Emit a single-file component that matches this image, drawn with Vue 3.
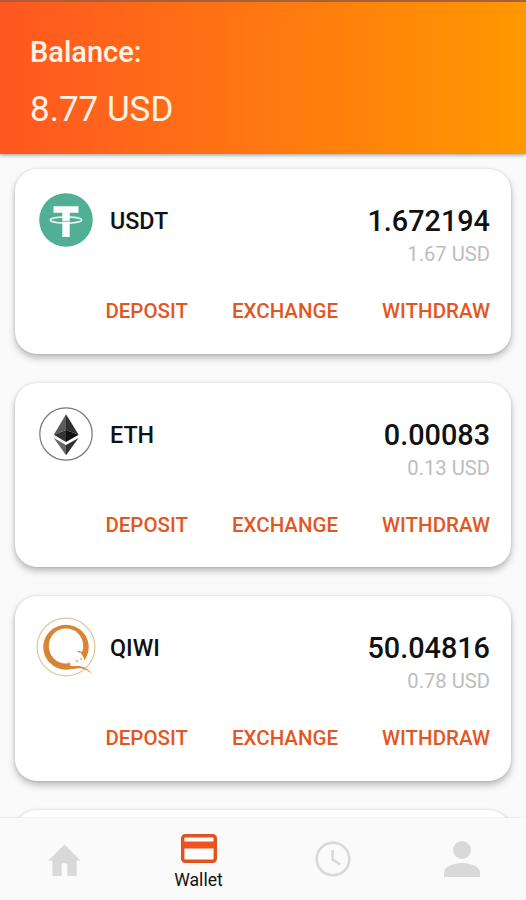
<script setup>
const wallets = [
  { code: 'USDT', amount: '1.672194', fiat: '1.67 USD' },
  { code: 'ETH', amount: '0.00083', fiat: '0.13 USD' },
  { code: 'QIWI', amount: '50.04816', fiat: '0.78 USD' },
]
</script>

<template>
  <div class="screen">
    <header class="header">
      <div class="header-label">Balance:</div>
      <div class="header-total">8.77 USD</div>
    </header>

    <main class="list">
      <section v-for="w in wallets" :key="w.code" class="card">
        <div class="row">
          <svg v-if="w.code === 'USDT'" class="coin" viewBox="0 0 60 60">
            <circle cx="30" cy="30" r="26.8" fill="#50af95" />
            <path d="M17.500 16.200h25v6.500h-8.800v24.300h-7.400V22.700h-8.800z" fill="#fff" />
            <ellipse cx="30" cy="30" rx="15.600" ry="3" fill="none" stroke="#fff" stroke-width="1.500" />
            <path d="M26.300 31.300h7.400" stroke="#50af95" stroke-width=".8" />
          </svg>
          <svg v-else-if="w.code === 'ETH'" class="coin" viewBox="0 0 60 60">
            <circle cx="30" cy="30" r="26.200" fill="#fff" stroke="#777" stroke-width="1.200" />
            <path d="M30 10.300 17.800 30.800 30 26z" fill="#5b5b5b" />
            <path d="M30 10.300 42.600 30.800 30 26z" fill="#303030" />
            <path d="M17.800 30.800 30 26v12z" fill="#343434" />
            <path d="M42.600 30.800 30 26v12z" fill="#111" />
            <path d="M17.800 34 30 41v10.300z" fill="#666" />
            <path d="M42.600 34 30 41v10.300z" fill="#303030" />
          </svg>
          <svg v-else class="coin" viewBox="0 0 60 60">
            <circle cx="30" cy="30" r="28.900" fill="#fff" stroke="#e0c49c" stroke-width="1.200" />
            <ellipse cx="30" cy="30.200" rx="22.700" ry="22.500" fill="#d98334" />
            <ellipse cx="30" cy="29" rx="17.200" ry="17.600" fill="#fff" />
            <path d="M33 46c0-6 5-11 10-10.500 2.500.5 4 3 5 6.500l1 2-3 8-6-2-6-1.500z" fill="#fff" />
            <path
              d="M33 49.800c4 .3 7-1 11-.6 5.500 1 9 3.500 12 7.600-3-2.300-6-4.700-10-5.400-4-.6-7 1.200-12 .4z"
              fill="#d98334"
            />
            <path d="M41.500 34.800c2.500-.5 4.500.6 5.500 2.600M39.600 43.600l2.600.9M44.500 41.600l1.400.8M32 45.800l2.500 1.600" stroke="#d98334" stroke-width="1.100" fill="none" />
          </svg>
          <span class="code">{{ w.code }}</span>
          <div class="values">
            <div class="amount">{{ w.amount }}</div>
            <div class="fiat">{{ w.fiat }}</div>
          </div>
        </div>
        <div class="actions">
          <span>DEPOSIT</span>
          <span>EXCHANGE</span>
          <span>WITHDRAW</span>
        </div>
      </section>
      <section class="card"></section>
    </main>

    <nav class="nav">
      <div class="tab">
        <svg class="home" viewBox="0 0 34 34"><path d="M17 1.500 33.500 18H29.500v16H20V23.500a3 3 0 0 0-6 0V34H4.500V18H.5z" fill="#d9d9d9" /></svg>
      </div>
      <div class="tab active">
        <svg class="wallet" viewBox="0 0 36 29">
          <rect x="1.700" y="1.700" width="32.600" height="25.600" rx="2.500" fill="#fff" stroke="#e2501c" stroke-width="3.400" />
          <path d="M2 7.500h32v7H2z" fill="#f4511e" />
        </svg>
        <span class="tab-label">Wallet</span>
      </div>
      <div class="tab">
        <svg class="clock" viewBox="0 0 36 36">
          <circle cx="18" cy="18" r="16.300" fill="none" stroke="#d9d9d9" stroke-width="2.600" />
          <path d="M17.700 9v9.500l7.600 5" fill="none" stroke="#d9d9d9" stroke-width="2.600" />
        </svg>
      </div>
      <div class="tab">
        <svg class="person" viewBox="0 0 36 36">
          <circle cx="18" cy="9" r="9" fill="#d9d9d9" />
          <path d="M0 36v-4.500C0 25.500 9.500 22 18 22s18 3.500 18 9.500V36z" fill="#d9d9d9" />
        </svg>
      </div>
    </nav>
  </div>
</template>

<style>
body {
  margin: 0;
}
</style>

<style scoped>
.screen {
  box-sizing: border-box;
  width: 526px;
  height: 900px;
  overflow: hidden;
  display: flex;
  flex-direction: column;
  background: #fafafa;
  font-family: Roboto, "Liberation Sans", sans-serif;
  color: #111;
}
.header {
  box-sizing: border-box;
  flex: none;
  height: 154px;
  padding: 34px 30px 0;
  border-top: 2px solid #a9603a;
  background: linear-gradient(90deg, #ff5722, #ff9800);
  box-shadow: 0 1px 4px rgba(0, 0, 0, 0.4);
  color: #fff3e6;
}
.header-label {
  font-size: 29px;
  line-height: 33px;
  font-weight: 500;
}
.header-total {
  margin-top: 20px;
  font-size: 35px;
  line-height: 42px;
  font-weight: 400;
}
.list {
  flex: 1;
  min-height: 0;
  display: flex;
  flex-direction: column;
  gap: 29px;
  padding: 15px 15px 0;
  overflow: hidden;
}
.card {
  box-sizing: border-box;
  flex: none;
  height: 184.500px;
  padding: 21px 21px 0 21px;
  border-radius: 22px;
  background: #fff;
  box-shadow: 0 4px 7px rgba(0, 0, 0, 0.26), 0 0 3px rgba(0, 0, 0, 0.12);
}
.row {
  display: flex;
  align-items: flex-start;
  height: 101px;
}
.coin {
  flex: none;
  width: 60px;
  height: 60px;
}
.code {
  margin-left: 14px;
  font-size: 23.300px;
  line-height: 63px;
  font-weight: 500;
}
.values {
  margin-left: auto;
  padding-top: 14px;
  text-align: right;
}
.amount {
  font-size: 28.800px;
  line-height: 34px;
  font-weight: 500;
}
.fiat {
  font-size: 20.200px;
  line-height: 32px;
  font-weight: 400;
  color: #bdbdbd;
}
.actions {
  display: flex;
  justify-content: flex-end;
  gap: 44px;
  font-size: 20.500px;
  line-height: 41px;
  font-weight: 500;
  color: #e2571f;
}
.nav {
  box-sizing: border-box;
  flex: none;
  height: 82px;
  display: grid;
  grid-template-columns: 129px 139px 130px 127px;
  background: #fafafa;
  box-shadow: 0 0 2px rgba(0, 0, 0, 0.14);
}
.tab {
  display: flex;
  flex-direction: column;
  align-items: center;
  justify-content: center;
}
.tab.active {
  justify-content: flex-start;
  padding-top: 16px;
}
.home {
  width: 33px;
  height: 33px;
}
.wallet {
  width: 36px;
  height: 29px;
}
.tab-label {
  margin-top: 7px;
  font-size: 17.600px;
  line-height: 20px;
}
.clock,
.person {
  width: 36px;
  height: 36px;
}
</style>
